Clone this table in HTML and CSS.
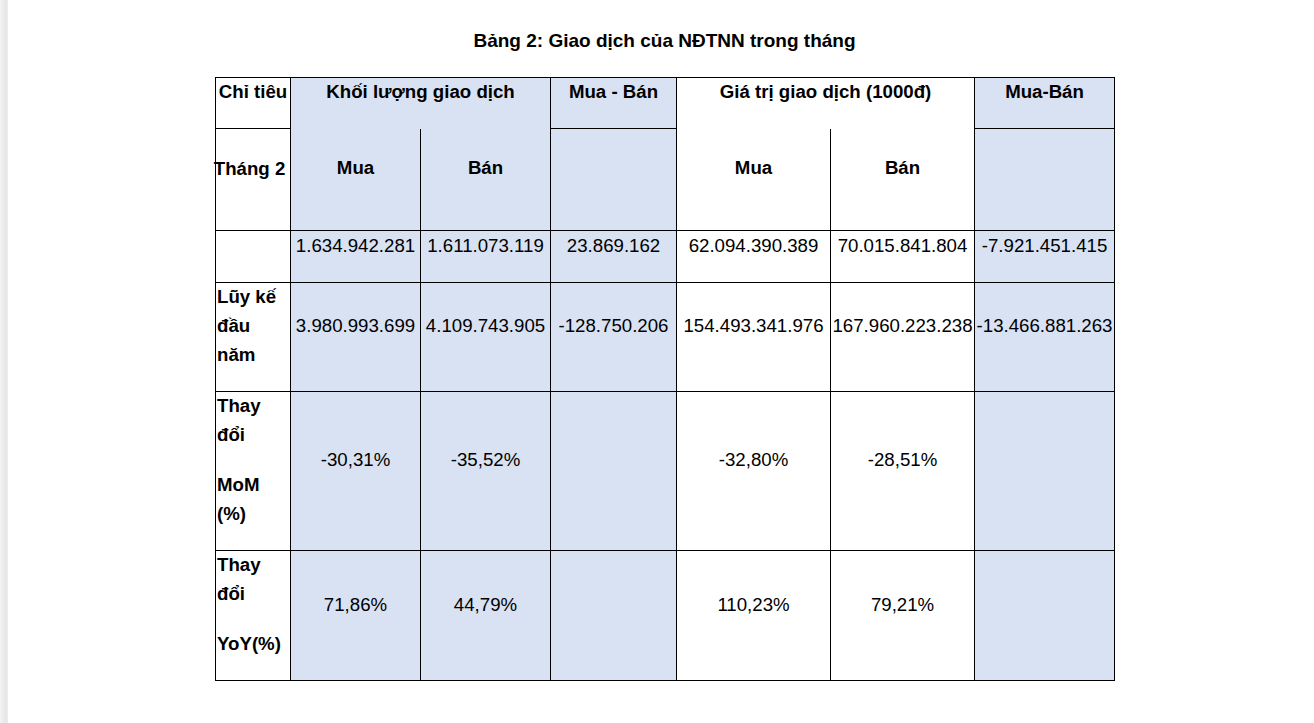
FILE: index.html
```html
<!DOCTYPE html>
<html lang="vi">
<head>
<meta charset="utf-8">
<title>Bảng 2: Giao dịch của NĐTNN trong tháng</title>
<link rel="stylesheet" href="styles.css">
</head>
<body>
<div class="shell">
  <div class="gutter"></div>
  <main class="page">
    <div class="doc">
      <p class="title">Bảng 2: Giao dịch của NĐTNN trong tháng</p>
      <table class="data">
        <colgroup>
          <col class="c1"><col class="c2"><col class="c3"><col class="c4"><col class="c5"><col class="c6"><col class="c7">
        </colgroup>
        <tr class="r1">
          <th><p>Chỉ tiêu</p></th>
          <th colspan="2" class="blue group"><p>Khối lượng giao dịch</p></th>
          <th class="blue"><p>Mua - Bán</p></th>
          <th colspan="2" class="group"><p>Giá trị giao dịch (1000đ)</p></th>
          <th class="blue"><p>Mua-Bán</p></th>
        </tr>
        <tr class="r2">
          <th><p class="shift">Tháng 2</p></th>
          <th class="blue sub"><p>Mua</p></th>
          <th class="blue sub"><p>Bán</p></th>
          <th class="blue"><p></p></th>
          <th class="sub"><p>Mua</p></th>
          <th class="sub"><p>Bán</p></th>
          <th class="blue"><p></p></th>
        </tr>
        <tr class="r3">
          <td class="label"><p></p></td>
          <td class="blue"><p>1.634.942.281</p></td>
          <td class="blue"><p>1.611.073.119</p></td>
          <td class="blue"><p>23.869.162</p></td>
          <td><p>62.094.390.389</p></td>
          <td><p>70.015.841.804</p></td>
          <td class="blue"><p>-7.921.451.415</p></td>
        </tr>
        <tr class="r4">
          <td class="label"><p>Lũy kế đầu năm</p></td>
          <td class="blue"><p>3.980.993.699</p></td>
          <td class="blue"><p>4.109.743.905</p></td>
          <td class="blue"><p>-128.750.206</p></td>
          <td><p>154.493.341.976</p></td>
          <td><p>167.960.223.238</p></td>
          <td class="blue"><p>-13.466.881.263</p></td>
        </tr>
        <tr class="r5">
          <td class="label"><p>Thay đổi</p><p>MoM (%)</p></td>
          <td class="blue"><p>-30,31%</p></td>
          <td class="blue"><p>-35,52%</p></td>
          <td class="blue"><p></p></td>
          <td><p>-32,80%</p></td>
          <td><p>-28,51%</p></td>
          <td class="blue"><p></p></td>
        </tr>
        <tr class="r6">
          <td class="label"><p>Thay đổi</p><p>YoY(%)</p></td>
          <td class="blue"><p>71,86%</p></td>
          <td class="blue"><p>44,79%</p></td>
          <td class="blue"><p></p></td>
          <td><p>110,23%</p></td>
          <td><p>79,21%</p></td>
          <td class="blue"><p></p></td>
        </tr>
      </table>
    </div>
  </main>
</div>
</body>
</html>
```
FILE: styles.css
```css
html, body {
  margin: 0;
  padding: 0;
  background: #ffffff;
}

body {
  font-family: "Liberation Sans", Arial, sans-serif;
  color: #000000;
}

.shell {
  display: flex;
  min-height: 723px;
}

.gutter {
  width: 8px;
  flex: 0 0 8px;
  background: linear-gradient(to right, #f3f3f3, #e6e6e6 70%, #ececec);
}

.page {
  flex: 1 1 auto;
  background: #ffffff;
}

.doc {
  width: 899px;
  margin-left: 207px;
  padding-top: 26px;
}

.title {
  margin: 0 0 22px;
  font-size: 19px;
  line-height: 29px;
  font-weight: bold;
  text-align: center;
}

.data {
  border-collapse: collapse;
  table-layout: fixed;
  width: 899px;
  font-size: 18.67px;
  line-height: 29px;
}

.c1 { width: 75px; }
.c2 { width: 130px; }
.c3 { width: 130px; }
.c4 { width: 126px; }
.c5 { width: 154px; }
.c6 { width: 144px; }
.c7 { width: 140px; }

.data th,
.data td {
  border: 1px solid #000000;
  padding: 0 1px;
  vertical-align: middle;
  text-align: center;
  white-space: normal;
  overflow: visible;
}

.data th {
  font-weight: bold;
}

.data td {
  font-weight: normal;
  white-space: nowrap;
}

.data td.label {
  font-weight: bold;
  text-align: left;
  white-space: normal;
}

.data p {
  margin: -1px 0 22px;
  min-height: 29px;
}

.data p.shift {
  margin-left: -7px;
  white-space: nowrap;
}

.data th.group {
  border-bottom-style: hidden;
}

.blue {
  background: #d9e2f3;
}

.r1 { height: 51px; }
.r2 { height: 102px; }
.r3 { height: 52px; }
.r4 { height: 109px; }
.r5 { height: 159px; }
.r6 { height: 130px; }
```
